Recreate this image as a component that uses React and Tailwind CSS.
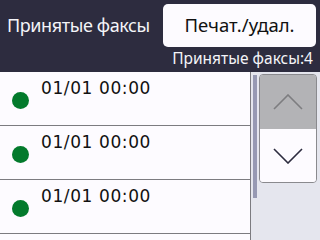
const rows = ['01/01 00:00', '01/01 00:00', '01/01 00:00', ''];

const noto = { fontFamily: '"Noto Sans", sans-serif' };

function FaxRow({ time }) {
  return (
    <div className="relative h-[54px] border-b border-[#7c7b80]">
      {time && (
        <>
          <div className="absolute left-[12px] top-[20px] h-[17px] w-[17px] rounded-full bg-[#037a2c]" />
          <div className="absolute left-[41px] top-[6px] text-[17px] leading-[20px] tracking-[0.6px] text-[#111]">
            {time}
          </div>
        </>
      )}
    </div>
  );
}

export default function App() {
  return (
    <div
      className="flex h-[240px] w-[320px] flex-col overflow-hidden bg-[#fdfbff]"
      style={{ fontFamily: '"DejaVu Sans", sans-serif' }}
    >
      {/* header */}
      <div className="h-[72px] shrink-0 bg-[#2d2c3f] text-white" style={noto}>
        <div className="flex h-[48px] items-center justify-between pl-[7px] pr-[4px] pt-[2px]">
          <span className="whitespace-nowrap text-[18px] tracking-[-0.4px] text-[#f4f4f8]">Принятые факсы</span>
          <button className="flex h-[43px] w-[153px] shrink-0 items-center justify-center rounded-[5px] bg-[#fdfbff] text-[18.5px] text-[#111]">
            Печат./удал.
          </button>
        </div>
        <div className="whitespace-nowrap pr-[7px] text-right text-[15.5px] leading-[20px] text-[#f4f4f8]">
          Принятые факсы:4
        </div>
      </div>

      {/* body */}
      <div className="flex flex-1">
        <div className="w-[250px] shrink-0">
          {rows.map((t, i) => (
            <FaxRow key={i} time={t} />
          ))}
        </div>
        <div className="flex flex-1 border-l border-[#7c7b80] bg-[#e5e6ee] pt-[2px]">
          <div className="ml-[2px] mt-[1px] h-[123px] w-[4px] bg-[#9799b3]" />
          <div className="ml-[2px] flex h-[109px] w-[58px] flex-col overflow-hidden rounded-[4px] border border-[#8a8a8e]">
            <div className="flex h-[54px] items-center justify-center bg-[#b3b3b6]">
              <svg width="30" height="16" viewBox="0 0 30 16" fill="none">
                <path d="M1 15 L15 1 L29 15" stroke="#7d7d80" strokeWidth="1.6" />
              </svg>
            </div>
            <div className="flex flex-1 items-center justify-center bg-[#fdfbff]">
              <svg width="30" height="16" viewBox="0 0 30 16" fill="none">
                <path d="M1 1 L15 15 L29 1" stroke="#2d2c3f" strokeWidth="1.6" />
              </svg>
            </div>
          </div>
        </div>
      </div>
    </div>
  );
}
